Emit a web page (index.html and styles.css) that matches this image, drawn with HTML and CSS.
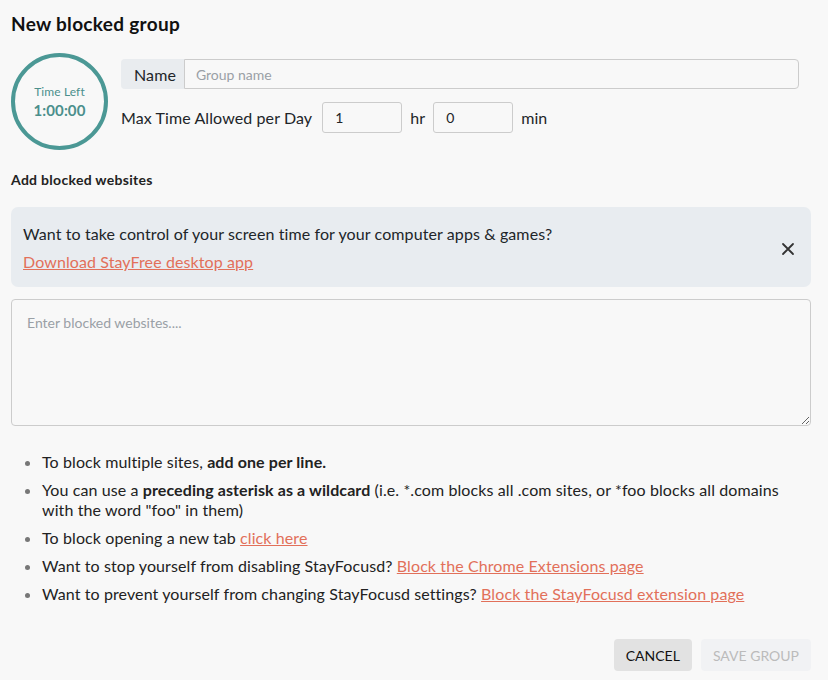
FILE: index.html
```html
<!DOCTYPE html>
<html lang="en">
<head>
    <meta charset="UTF-8">
    <meta name="viewport" content="width=device-width, initial-scale=1.0">
    <title>New blocked group</title>
    <link rel="stylesheet" href="styles.css">
</head>
<body>
    <main class="dialog">
        <h1 class="titulo">New blocked group</h1>

        <section class="topo">
            <div class="relogio">
                <span class="relogio-label">Time Left</span>
                <span class="relogio-tempo">1:00:00</span>
            </div>
            <div class="campos">
                <div class="grupo-nome">
                    <span class="grupo-label">Name</span>
                    <input type="text" class="grupo-input" placeholder="Group name">
                </div>
                <div class="linha-tempo">
                    <span class="tempo-label">Max Time Allowed per Day</span>
                    <input type="number" class="tempo-input" value="1">
                    <span class="tempo-unidade">hr</span>
                    <input type="number" class="tempo-input" value="0">
                    <span class="tempo-unidade">min</span>
                </div>
            </div>
        </section>

        <h2 class="subtitulo">Add blocked websites</h2>

        <div class="aviso">
            <div class="aviso-texto">
                <p>Want to take control of your screen time for your computer apps &amp; games?</p>
                <a href="#" class="link">Download StayFree desktop app</a>
            </div>
            <button class="fechar" aria-label="Close">
                <svg width="14" height="14" viewBox="0 0 14 14">
                    <path d="M2 2 L12 12 M12 2 L2 12" stroke="#333" stroke-width="1.8" stroke-linecap="round"/>
                </svg>
            </button>
        </div>

        <textarea class="sites" placeholder="Enter blocked websites...."></textarea>

        <ul class="dicas">
            <li>To block multiple sites, <b>add one per line.</b></li>
            <li>You can use a <b>preceding asterisk as a wildcard</b> (i.e. *.com blocks all .com sites, or *foo blocks all domains with the word "foo" in them)</li>
            <li>To block opening a new tab <a href="#" class="link">click here</a></li>
            <li>Want to stop yourself from disabling StayFocusd? <a href="#" class="link">Block the Chrome Extensions page</a></li>
            <li>Want to prevent yourself from changing StayFocusd settings? <a href="#" class="link">Block the StayFocusd extension page</a></li>
        </ul>

        <div class="acoes">
            <button class="botao cancelar">Cancel</button>
            <button class="botao salvar" disabled>Save group</button>
        </div>
    </main>
</body>
</html>
```

FILE: styles.css
```css
body {
    font-family: Lato, 'Open Sans', sans-serif;
    margin: 0;
    padding: 0;
    background-color: #f8f8f8;
    color: #212529;
    font-size: 16px;
    letter-spacing: 0.1px;
}
.dialog {
    padding: 12px 17px 9px 11px;
}
.titulo {
    margin: 0;
    font-size: 19px;
    font-weight: bold;
    line-height: 24px;
    letter-spacing: 0.3px;
    color: #111;
}
.topo {
    display: flex;
    align-items: flex-start;
    margin-top: 17px;
}
.relogio {
    width: 89px;
    height: 89px;
    border: 4px solid #4b9895;
    border-radius: 50%;
    display: flex;
    flex-direction: column;
    align-items: center;
    justify-content: center;
    color: #4b8f8c;
    flex-shrink: 0;
}
.relogio-label {
    font-size: 12px;
    line-height: 16px;
}
.relogio-tempo {
    font-size: 15px;
    font-weight: bold;
    line-height: 20px;
}
.campos {
    flex: 1;
    margin-left: 13px;
    margin-top: 6px;
    margin-right: 12px;
}
.grupo-nome {
    display: flex;
    height: 30px;
}
.grupo-label {
    background-color: #e9ecef;
    padding: 0 8px 0 12px;
    display: flex;
    align-items: center;
    border-radius: 4px 0 0 4px;
    border: 1px solid #e9ecef;
    border-right: none;
}
.grupo-input {
    flex: 1;
    border: 1px solid #ccc;
    border-radius: 0 4px 4px 0;
    padding: 0 11px;
    font-family: inherit;
    font-size: 14px;
    background-color: #f8f8f8;
}
.grupo-input::placeholder,
.sites::placeholder {
    color: #9aa0a6;
}
.linha-tempo {
    display: flex;
    align-items: center;
    margin-top: 13px;
}
.tempo-label {
    margin-right: 10px;
}
.tempo-input {
    width: 80px;
    height: 31px;
    box-sizing: border-box;
    border: 1px solid #ccc;
    border-radius: 3px;
    padding: 0 12px;
    font-family: inherit;
    font-size: 14px;
    background-color: #f8f8f8;
    color: #212529;
    -moz-appearance: textfield;
}
.tempo-input::-webkit-inner-spin-button,
.tempo-input::-webkit-outer-spin-button {
    -webkit-appearance: none;
    margin: 0;
}
.tempo-unidade {
    margin: 0 8px;
}
.subtitulo {
    margin: 21px 0 0;
    font-size: 14px;
    font-weight: bold;
    line-height: 18px;
    letter-spacing: 0.3px;
    color: #222;
}
.aviso {
    margin-top: 18px;
    background-color: #e8ecf0;
    border-radius: 7px;
    display: flex;
    align-items: center;
    padding: 17px 16px 15px 12px;
}
.aviso-texto {
    flex: 1;
}
.aviso-texto p {
    margin: 0 0 8px;
    line-height: 20px;
}
.link {
    color: #e2705a;
    text-decoration: underline;
    line-height: 20px;
}
.fechar {
    background: none;
    border: none;
    padding: 0;
    width: 14px;
    height: 14px;
    cursor: pointer;
    margin-top: 2px;
}
.sites {
    display: block;
    width: 100%;
    box-sizing: border-box;
    height: 127px;
    margin-top: 12px;
    border: 1px solid #ccc;
    border-radius: 4px;
    background-color: #f8f8f8;
    padding: 14px 15px;
    font-family: inherit;
    font-size: 14px;
}
.dicas {
    margin: 26px 0 0;
    padding-left: 31px;
    line-height: 20px;
    color: #222;
}
.dicas li {
    margin-bottom: 8px;
}
.dicas li::marker {
    color: #777;
}
.acoes {
    display: flex;
    justify-content: flex-end;
    gap: 9px;
    margin-top: 35px;
}
.botao {
    height: 32px;
    border: none;
    border-radius: 4px;
    font-family: inherit;
    font-size: 14px;
    text-transform: uppercase;
    padding: 0 12px;
}
.cancelar {
    background-color: #e2e2e2;
    color: #111;
    cursor: pointer;
}
.salvar {
    background-color: #f1f2f4;
    color: #bbb;
}
```
